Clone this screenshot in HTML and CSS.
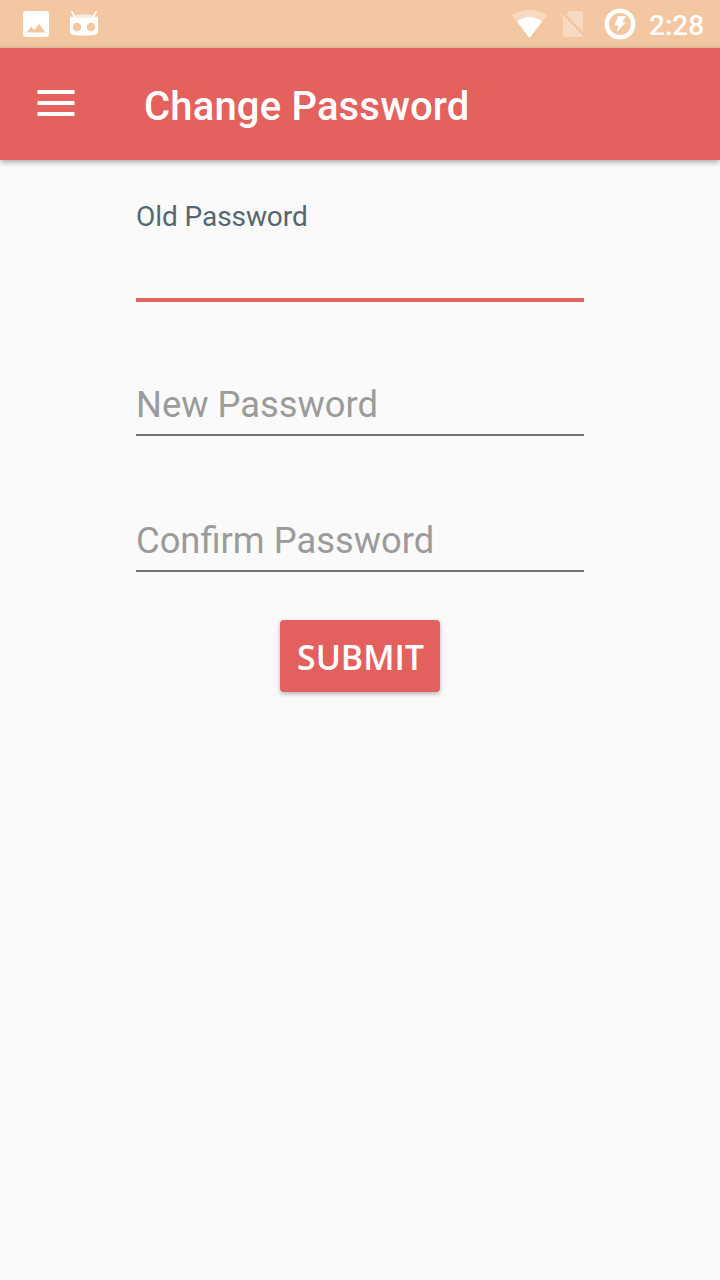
FILE: index.html
```html
<!DOCTYPE html>
<html lang="en">
<head>
<meta charset="utf-8">
<title>Change Password</title>
<link rel="stylesheet" href="styles.css">
</head>
<body>
<div class="status-bar">
  <div class="notifications">
    <svg width="26" height="26" viewBox="0 0 26 26"><path fill="#fff" fill-rule="evenodd" d="M3 0h20a3 3 0 0 1 3 3v20a3 3 0 0 1-3 3H3a3 3 0 0 1-3-3V3a3 3 0 0 1 3-3zM3.500 21.500h19L16.300 13l-4.800 6-3.300-3.500z"/></svg>
    <svg width="30" height="26" viewBox="0 0 30 26"><path d="M2.500 0l3 5.500M27.500 0l-3 5.500" stroke="#fff" stroke-opacity=".85" stroke-width="2.200"/><path fill="#fff" fill-opacity=".65" d="M4 7.500V5Q15 1.500 26 5v2.500z"/><path fill="#fff" fill-rule="evenodd" d="M1 5.500q14 3 28 0v15q0 3-4 3.500-10 1-20 0-4-.5-4-3.500zM8 11.800a4.200 4.200 0 1 0 0 8.400 4.200 4.200 0 0 0 0-8.400zm14 0a4.200 4.200 0 1 0 0 8.400 4.200 4.200 0 0 0 0-8.400z"/></svg>
  </div>
  <div class="system">
    <svg width="36" height="30" viewBox="0 0 36 30"><path fill="#fff" fill-opacity=".35" d="M0 6.500Q17 -4.500 35 6.500L17.500 29z"/><path fill="#fff" d="M5 12.500q12.500-9 25 0L17.500 29z"/></svg>
    <svg class="sim" width="28" height="30" viewBox="0 0 28 30"><path fill="#fff" fill-opacity=".33" d="M9.500 2H21a2 2 0 0 1 2 2v19L6 5.500zM3 7L22.500 27 21 28H5a2 2 0 0 1-2-2z"/><path d="M.5 4.500l24 25" stroke="#fff" stroke-opacity=".2" stroke-width="1.600"/></svg>
    <svg class="battery" width="32" height="32" viewBox="0 0 32 32"><circle cx="16" cy="16" r="13.200" fill="none" stroke="#fff" stroke-width="4.600"/><path fill="#fff" d="M14 8h8l-3.500 6H22L12.500 24.500l2-7H10.500z"/></svg>
    <span class="clock">2:28</span>
  </div>
</div>
<header class="toolbar">
  <svg class="menu" width="38" height="26" viewBox="0 0 38 26"><path fill="#fff" d="M.5 0h37v4h-37zM.5 11h37v4h-37zM.5 22h37v4h-37z"/></svg>
  <h1 class="title">Change Password</h1>
</header>
<main class="form">
  <div class="field focused"><span class="label">Old Password</span></div>
  <div class="field"><span class="label">New Password</span></div>
  <div class="field"><span class="label">Confirm Password</span></div>
  <button class="submit"><span class="submit-text">SUBMIT</span></button>
</main>
</body>
</html>
```
FILE: styles.css
```css
* { box-sizing: border-box; }
body {
  margin: 0;
  min-height: 1280px;
  background: #fafafa;
  font-family: Roboto, sans-serif;
}
svg { display: block; flex: none; }
.status-bar {
  height: 48px;
  padding: 0 15px 0 23px;
  display: flex;
  justify-content: space-between;
  align-items: center;
  background: #f3c7a2;
}
.notifications { display: flex; gap: 20px; }
.system { display: flex; align-items: center; }
.sim { margin-left: 12px; }
.battery { margin-left: 15.500px; }
.clock {
  width: 56px;
  margin-left: 13.500px;
  padding-top: 3px;
  color: #fff;
  font-size: 28px;
  font-weight: 500;
  line-height: 32px;
  white-space: nowrap;
}
.toolbar {
  height: 112px;
  padding: 42px 0 0 37px;
  display: flex;
  align-items: flex-start;
  background: #e5615d;
  box-shadow: 0 2px 6px rgba(0, 0, 0, .35);
}
.title {
  margin: -7px 0 0 69px;
  color: #fff;
  font-size: 40px;
  font-weight: 500;
  line-height: 48px;
  letter-spacing: .17px;
}
.form {
  width: 448px;
  margin: 0 auto;
  display: flex;
  flex-direction: column;
}
.field {
  height: 136px;
  display: flex;
  align-items: flex-end;
  padding-bottom: 7px;
  border-bottom: 2px solid #737373;
  color: #9b9b9b;
  font-size: 36.350px;
  line-height: 44px;
}
.field:nth-child(2) { height: 134px; }
.focused {
  height: 142px;
  padding-top: 41px;
  align-items: flex-start;
  border-bottom: 4px solid #e0635d;
  color: #546672;
  font-size: 28px;
  line-height: 32px;
  letter-spacing: -.07px;
}
.submit {
  width: 160px;
  height: 72px;
  margin: 48px auto 0;
  padding: 2px 0 0 1px;
  display: flex;
  align-items: center;
  justify-content: center;
  border: 0;
  border-radius: 4px;
  background: #e4605e;
  box-shadow: 0 2px 4px rgba(0, 0, 0, .28);
  color: #fff;
  font: 600 35px/48px "Open Sans", sans-serif;
}
.submit-text { transform: scaleX(.97); }
```
